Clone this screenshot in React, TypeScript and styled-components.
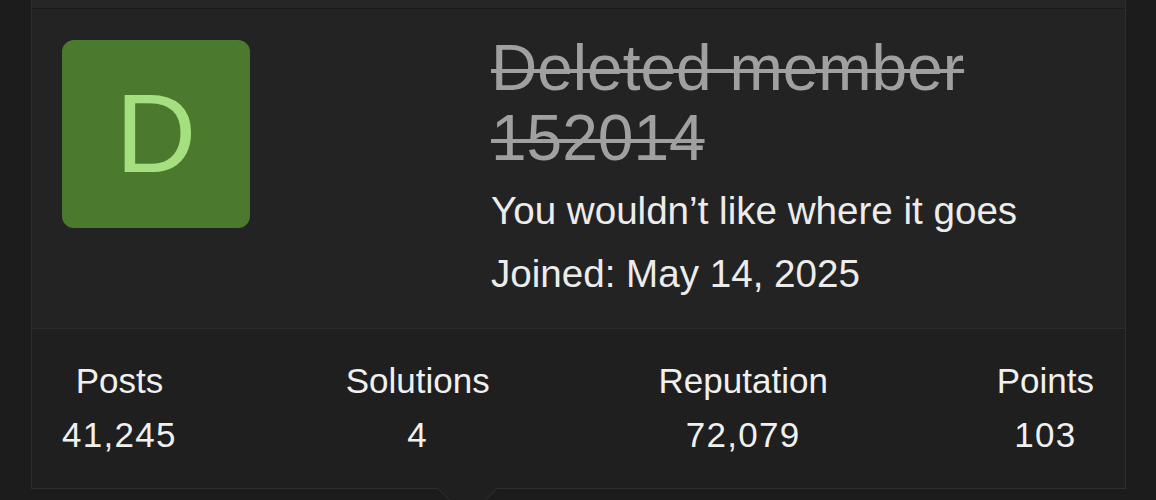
import React from "react";
import styled, { createGlobalStyle } from "styled-components";

const GlobalStyle = createGlobalStyle`
  html, body {
    margin: 0;
    padding: 0;
    background: #1c1c1c;
    overflow: hidden;
  }
  body {
    font-family: "Liberation Sans", Helvetica, Arial, sans-serif;
    -webkit-font-smoothing: antialiased;
  }
`;

const Page = styled.div`
  padding: 0 30px 0 31px;
  height: 500px;
  box-sizing: border-box;
`;

const Card = styled.div`
  position: relative;
  border-left: 1px solid #2d2d2d;
  border-right: 1px solid #2d2d2d;
  border-bottom: 1px solid #2f2f2f;

  &::after {
    content: "";
    position: absolute;
    left: 414px;
    bottom: -22px;
    width: 42px;
    height: 42px;
    background: #1f1f1f;
    border-right: 1px solid #2f2f2f;
    border-bottom: 1px solid #2f2f2f;
    border-bottom-right-radius: 4px;
    transform: rotate(45deg);
  }
`;

const TopStrip = styled.div`
  height: 8px;
  background: #262626;
  border-bottom: 1px solid #1a1a1a;
`;

const Profile = styled.div`
  display: flex;
  align-items: flex-start;
  background: #232323;
  padding: 31px 30px 23px 30px;
`;

const Avatar = styled.div`
  flex-shrink: 0;
  width: 188px;
  height: 188px;
  border-radius: 12px;
  background: #4b7a2e;
  color: #a6df80;
  font-size: 112px;
  line-height: 1;
  display: flex;
  align-items: center;
  justify-content: center;
`;

const Info = styled.div`
  margin-left: 241px;
  margin-top: -7px;
  min-width: 0;
`;

const Name = styled.div`
  font-size: 64px;
  line-height: 70px;
  color: #a0a0a0;
  text-decoration: line-through;
  text-decoration-thickness: 4px;
`;

const InfoLine = styled.div<{ $first?: boolean }>`
  font-size: 38.6px;
  line-height: 63px;
  color: #ececec;
  margin-top: ${(p) => (p.$first ? "6px" : "0")};
`;

const Stats = styled.div`
  display: flex;
  justify-content: space-between;
  background: #1f1f1f;
  border-top: 1px solid #2c2c2c;
  padding: 25px 31px 26px 30px;
`;

const Stat = styled.div`
  text-align: center;
  color: #f0f0f0;
`;

const StatLabel = styled.div`
  font-size: 35px;
  line-height: 54px;
`;

const StatValue = styled.div`
  font-size: 35px;
  line-height: 54px;
  letter-spacing: 1.3px;
`;

const stats = [
  { label: "Posts", value: "41,245" },
  { label: "Solutions", value: "4" },
  { label: "Reputation", value: "72,079" },
  { label: "Points", value: "103" },
];

export default function App() {
  return (
    <>
      <GlobalStyle />
      <Page>
        <Card>
          <TopStrip />
          <Profile>
            <Avatar>D</Avatar>
            <Info>
              <Name>Deleted member 152014</Name>
              <InfoLine $first>You wouldn’t like where it goes</InfoLine>
              <InfoLine>Joined: May 14, 2025</InfoLine>
            </Info>
          </Profile>
          <Stats>
            {stats.map((s) => (
              <Stat key={s.label}>
                <StatLabel>{s.label}</StatLabel>
                <StatValue>{s.value}</StatValue>
              </Stat>
            ))}
          </Stats>
        </Card>
      </Page>
    </>
  );
}
